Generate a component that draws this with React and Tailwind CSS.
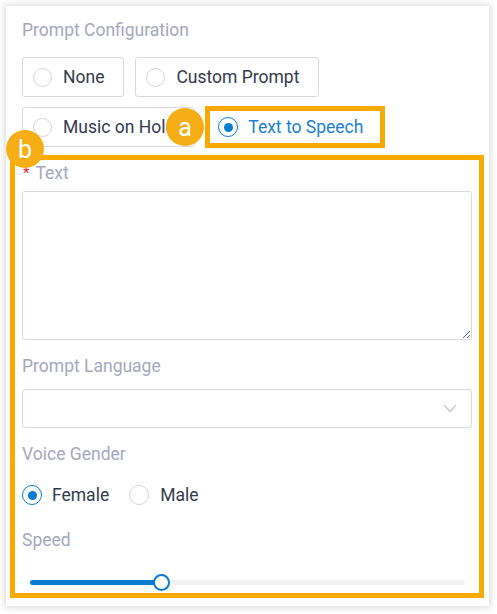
import { useState } from 'react'

const font = { fontFamily: 'Roboto, "Open Sans", Arial, sans-serif' }

function Radio({ checked, size = 'w-[19px] h-[19px]' }) {
  return (
    <span
      className={`${size} shrink-0 rounded-full border bg-white flex items-center justify-center ${
        checked ? 'border-[#0b7ad1]' : 'border-[#d3d5dc]'
      }`}
    >
      {checked && <span className="w-[9px] h-[9px] rounded-full bg-[#0b7ad1]" />}
    </span>
  )
}

function Option({ label, checked, onClick }) {
  return (
    <button
      onClick={onClick}
      className="h-[40px] border border-[#d9dae0] rounded-[3px] bg-white flex items-center pl-[10px] pr-[19px] gap-[11px] text-[17.5px] text-[#333b4d]"
    >
      <Radio checked={checked} />
      <span>{label}</span>
    </button>
  )
}

function Badge({ letter, className }) {
  return (
    <div
      className={`absolute w-[38px] h-[38px] rounded-full bg-[#f5ae15] text-white text-[25px] leading-none flex items-center justify-center ${className}`}
    >
      {letter}
    </div>
  )
}

export default function App() {
  const [gender, setGender] = useState('female')
  const [speed] = useState(0.3)

  return (
    <div className="w-[497px] h-[614px] bg-white pt-[6px] pl-[6px]" style={font}>
      <div className="relative w-[483px] h-[600px] bg-white shadow-[0_0_6px_2px_rgba(0,0,0,0.13)] pt-[12px] pl-[16px] pr-[17px] pb-[8px]">
        {/* Prompt Configuration */}
        <div className="h-[24px] leading-[24px] text-[17.5px] text-[#a4a8bc]">Prompt Configuration</div>

        <div className="mt-[15px] flex gap-[11px]">
          <Option label="None" />
          <Option label="Custom Prompt" />
        </div>
        <div className="mt-[10px] h-[40px] flex items-center gap-[10px]">
          <Option label="Music on Hold" />
          <div className="h-[42px] border-[5px] border-[#f9a900] bg-white flex items-center pl-[8px] pr-[17px] gap-[10px] text-[17.5px] text-[#1a7fd0]">
            <Radio checked size="w-[20px] h-[20px]" />
            <span>Text to Speech</span>
          </div>
        </div>

        {/* Text to speech settings */}
        <div className="mt-[8px] -ml-[12px] w-[474px] border-[5px] border-[#f9a900] pt-[1px] pl-[7px] pr-[7px] pb-[2px]">
          <div className="h-[24px] leading-[24px] text-[17.5px] text-[#a4a8bc] flex items-center">
            <span className="text-[#f5222d] text-[15px] ml-[1px] mr-[6px]">*</span>
            <span>Text</span>
          </div>
          <textarea className="mt-[6px] block w-full h-[149px] border border-[#d9dae0] rounded-[3px] outline-none" />

          <div className="mt-[14px] h-[24px] leading-[24px] text-[17.5px] text-[#a4a8bc]">Prompt Language</div>
          <div className="mt-[11px] h-[39px] border border-[#d9dae0] rounded-[3px] flex items-center justify-end pr-[14px]">
            <svg width="14" height="9" viewBox="0 0 14 9" fill="none">
              <path d="M1 1l6 6.5L13 1" stroke="#c3c5cd" strokeWidth="1.2" />
            </svg>
          </div>

          <div className="mt-[14px] h-[24px] leading-[24px] text-[17.5px] text-[#a4a8bc]">Voice Gender</div>
          <div className="mt-[17px] h-[24px] flex items-center text-[17.5px] text-[#333b4d]">
            <button onClick={() => setGender('female')} className="flex items-center gap-[10px]">
              <Radio checked={gender === 'female'} size="w-[20px] h-[20px]" />
              <span>Female</span>
            </button>
            <button onClick={() => setGender('male')} className="ml-[20px] flex items-center gap-[11px]">
              <Radio checked={gender === 'male'} size="w-[20px] h-[20px]" />
              <span>Male</span>
            </button>
          </div>

          <div className="mt-[21px] h-[24px] leading-[24px] text-[17.5px] text-[#a4a8bc]">Speed</div>
          <div className="mt-[22px] h-[17px] pl-[8px] pr-[7px]">
            <div className="relative h-full flex items-center">
              <div className="w-full h-[5px] rounded-full bg-[#f2f2f3]">
                <div className="h-full rounded-full bg-[#0b7ad1]" style={{ width: `${speed * 100}%` }} />
              </div>
              <div
                className="absolute top-0 w-[17px] h-[17px] -ml-[8px] rounded-full bg-white border-2 border-[#0b7ad1]"
                style={{ left: `${speed * 100}%` }}
              />
            </div>
          </div>
        </div>

        <Badge letter="a" className="left-[160px] top-[102px]" />
        <Badge letter="b" className="left-[0px] top-[124px]" />
      </div>
    </div>
  )
}
